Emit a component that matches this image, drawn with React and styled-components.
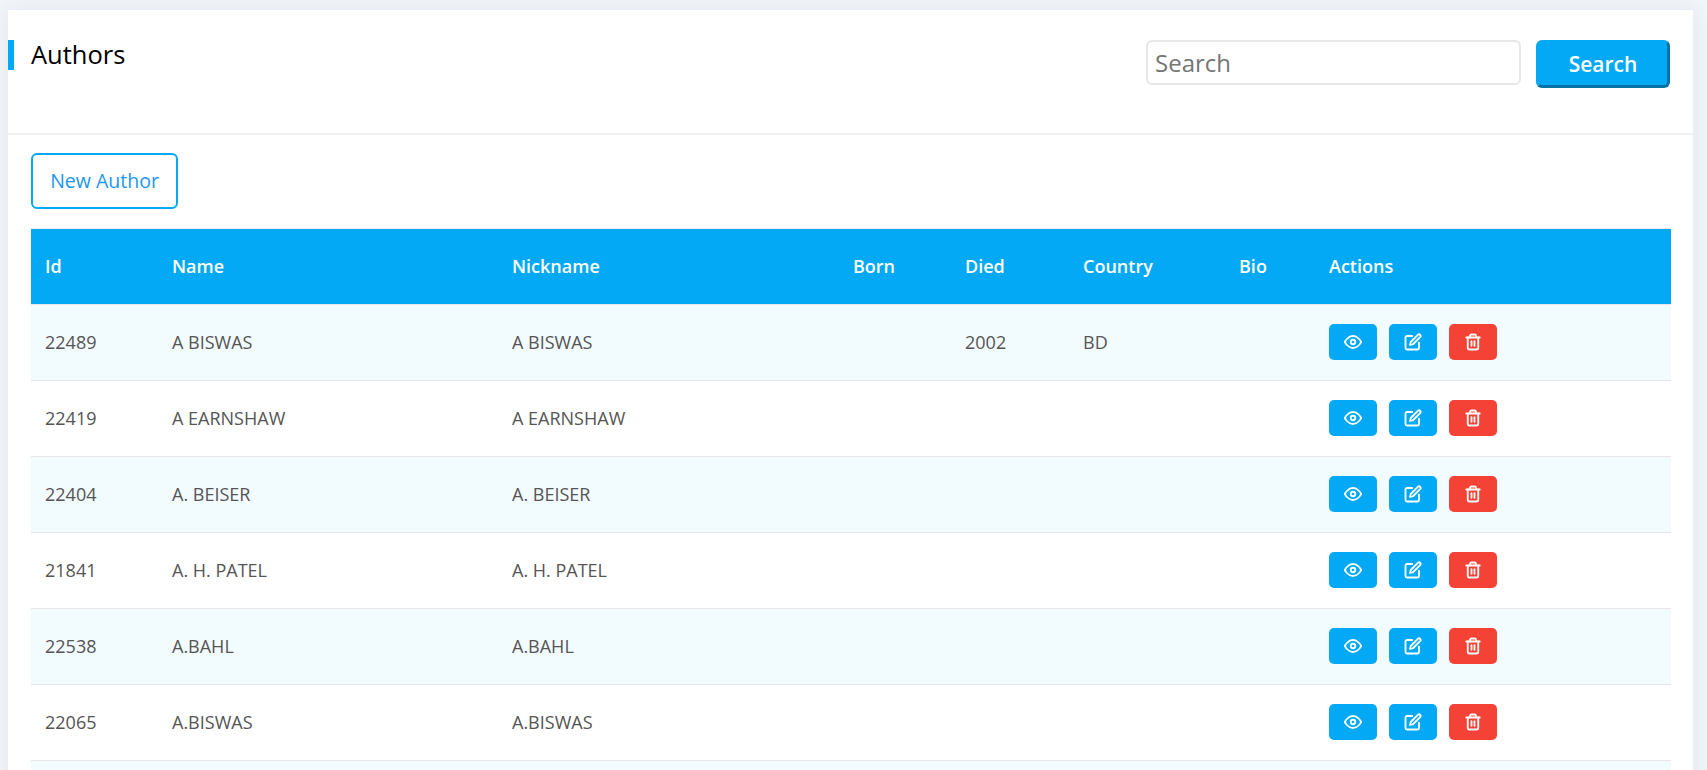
import React from "react";
import styled, { createGlobalStyle, css } from "styled-components";
import { FiEye, FiEdit, FiTrash2 } from "react-icons/fi";

const Global = createGlobalStyle`
  * { box-sizing: border-box; }
  body {
    margin: 0;
    height: 770px;
    overflow: hidden;
    background: #f1f4f8;
    font-family: "Open Sans", sans-serif;
  }
`;

const Page = styled.div`
  height: 770px;
  overflow: hidden;
  padding: 10px 14px 0 8px;
`;

const Card = styled.main`
  height: 800px;
  background: #fff;
  box-shadow: 0 1px 20px 0 rgba(69, 90, 100, 0.08);
`;

const CardHeader = styled.header`
  display: flex;
  justify-content: space-between;
  align-items: flex-start;
  height: 125px;
  padding: 30px 23px 0 0;
  border-bottom: 2px solid #f1f1f1;
`;

const Title = styled.h1`
  margin: 0;
  height: 30px;
  padding-left: 17px;
  border-left: 6px solid #04a9f5;
  font-size: 25.5px;
  font-weight: 400;
  line-height: 28px;
  color: #000;
`;

const SearchForm = styled.form`
  display: flex;
  gap: 15px;
`;

const SearchInput = styled.input`
  width: 375px;
  height: 45px;
  padding: 0 7px;
  border: 2px solid #e7e7e7;
  border-radius: 6px;
  font: 400 24px "Open Sans", sans-serif;
  &::placeholder { color: #757575; }
`;

const SearchButton = styled.button`
  width: 134px;
  height: 48px;
  border: 3px solid;
  border-color: #04a9f5 #0272a6 #0272a6 #04a9f5;
  border-radius: 6px;
  background: #04a9f5;
  color: #fff;
  font: 600 21px "Open Sans", sans-serif;
`;

const CardBody = styled.section`
  padding: 18px 22px 0 23px;
`;

const NewButton = styled.button`
  display: block;
  width: 147px;
  height: 56px;
  margin-bottom: 19px;
  padding: 0 0 2px;
  border: 2px solid #04a9f5;
  border-radius: 6px;
  background: #fff;
  color: #2196f3;
  font: 400 19.5px "Open Sans", sans-serif;
`;

const Table = styled.div`
  border-top: 1px solid #eaeaea;
`;

const rowGrid = css`
  display: grid;
  grid-template-columns: 127px 340px 341px 112px 118px 156px 90px 1fr;
  align-items: center;
  height: 76px;
  padding-bottom: 1px;
  border-bottom: 1px solid #e7e7e7;
  font-size: 18px;
`;

const HeadRow = styled.div`
  ${rowGrid}
  background: #04a9f5;
  color: #fff;
  font-weight: 600;
`;

const Row = styled.div`
  ${rowGrid}
  background: ${(p) => (p.$striped ? "#f2fbfe" : "#fff")};
  color: #555;
`;

const Cell = styled.div`
  padding-left: 14px;
  white-space: nowrap;
`;

const Actions = styled(Cell)`
  display: flex;
  gap: 12px;
`;

const ActionButton = styled.button`
  display: flex;
  align-items: center;
  justify-content: center;
  width: 48px;
  height: 36px;
  padding: 0;
  border: 0;
  border-radius: 5px;
  background: ${(p) => (p.$danger ? "#f44336" : "#04a9f5")};
  color: #fff;
  font-size: 18px;

  svg {
    stroke-width: 2.4;
  }
`;

const columns = ["Id", "Name", "Nickname", "Born", "Died", "Country", "Bio", "Actions"];

const authors = [
  { id: 22489, name: "A BISWAS", died: "2002", country: "BD" },
  { id: 22419, name: "A EARNSHAW" },
  { id: 22404, name: "A. BEISER" },
  { id: 21841, name: "A. H. PATEL" },
  { id: 22538, name: "A.BAHL" },
  { id: 22065, name: "A.BISWAS" },
];

export default function App() {
  return (
    <Page>
      <Global />
      <Card>
        <CardHeader>
          <Title>Authors</Title>
          <SearchForm>
            <SearchInput placeholder="Search" />
            <SearchButton type="button">Search</SearchButton>
          </SearchForm>
        </CardHeader>
        <CardBody>
          <NewButton>New Author</NewButton>
          <Table>
            <HeadRow>
              {columns.map((c) => <Cell key={c}>{c}</Cell>)}
            </HeadRow>
            {authors.map((a, i) => (
              <Row key={a.id} $striped={i % 2 === 0}>
                <Cell>{a.id}</Cell>
                <Cell>{a.name}</Cell>
                <Cell>{a.name}</Cell>
                <Cell />
                <Cell>{a.died}</Cell>
                <Cell>{a.country}</Cell>
                <Cell />
                <Actions>
                  <ActionButton aria-label="View"><FiEye /></ActionButton>
                  <ActionButton aria-label="Edit"><FiEdit /></ActionButton>
                  <ActionButton $danger aria-label="Delete"><FiTrash2 /></ActionButton>
                </Actions>
              </Row>
            ))}
            <Row $striped />
          </Table>
        </CardBody>
      </Card>
    </Page>
  );
}
